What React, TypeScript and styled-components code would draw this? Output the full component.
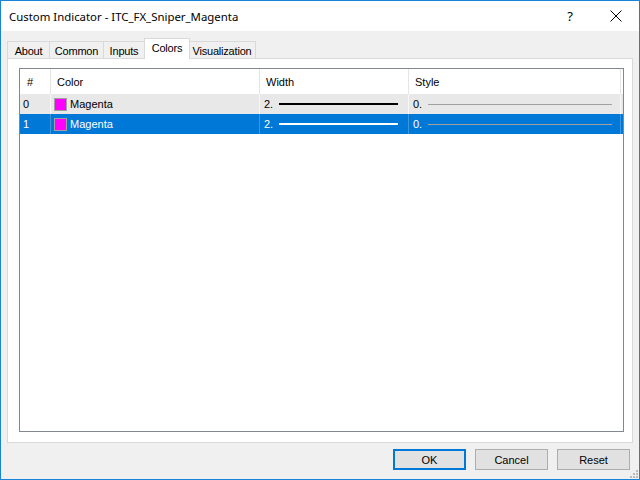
import styled, { createGlobalStyle } from "styled-components";

const GlobalStyle = createGlobalStyle`
  html, body {
    margin: 0;
    padding: 0;
    background: #ffffff;
  }
  * {
    box-sizing: border-box;
  }
`;

const Window = styled.div`
  position: relative;
  width: 640px;
  height: 480px;
  border: 1px solid #1883d7;
  background: #f0f0f0;
  display: flex;
  flex-direction: column;
  font-family: "Liberation Sans", Arial, sans-serif;
  font-size: 11px;
  color: #000;
`;

const TitleBar = styled.header`
  height: 30px;
  background: #ffffff;
  display: flex;
  align-items: center;
  padding-left: 8px;
`;

const Title = styled.h1`
  flex: 1;
  margin: 0;
  font-family: "Noto Sans", "Open Sans", sans-serif;
  font-weight: normal;
  font-size: 11.4px;
  color: #000;
`;

const CaptionButton = styled.button`
  width: 46px;
  height: 30px;
  border: 0;
  background: transparent;
  display: flex;
  align-items: center;
  justify-content: center;
  font-family: "Noto Sans", sans-serif;
  font-size: 13px;
  color: #000;
  padding: 0;
`;

const Body = styled.main`
  flex: 1;
  display: flex;
  flex-direction: column;
  padding: 7px 6px 0 6px;
`;

const TabStrip = styled.nav`
  display: flex;
  align-items: flex-end;
  height: 21px;
  margin-bottom: -1px;
  position: relative;
  z-index: 1;
`;

const Tab = styled.div<{ $active?: boolean; $width: number }>`
  width: ${(p) => p.$width + (p.$active ? 2 : 0)}px;
  height: ${(p) => (p.$active ? "21px" : "18px")};
  padding-top: ${(p) => (p.$active ? "3px" : "3px")};
  margin-left: ${(p) => (p.$active ? "-1px" : "0")};
  margin-right: ${(p) => (p.$active ? "-1px" : "0")};
  border: 1px solid #d9d9d9;
  border-left: ${(p) => (p.$active ? "1px solid #d9d9d9" : "0")};
  border-bottom: ${(p) => (p.$active ? "0" : "1px solid #d9d9d9")};
  background: ${(p) => (p.$active ? "#ffffff" : "#f0f0f0")};
  text-align: center;
  white-space: nowrap;
  letter-spacing: -0.2px;
  position: relative;
  z-index: ${(p) => (p.$active ? 2 : 1)};
  &:first-child {
    border-left: 1px solid #d9d9d9;
  }
`;

const Panel = styled.section`
  height: 385px;
  border: 1px solid #d9d9d9;
  background: #ffffff;
  padding: 9px 8px 10px 11px;
  display: flex;
`;

const ListView = styled.div`
  flex: 1;
  border: 1px solid #828790;
  background: #ffffff;
`;

const GridRow = styled.div<{ $kind: "head" | "plain" | "selected" }>`
  display: grid;
  grid-template-columns: 31px 209px 149px 212px;
  height: ${(p) => (p.$kind === "head" ? "25px" : "20px")};
  background: ${(p) =>
    p.$kind === "selected" ? "#0078d7" : p.$kind === "plain" ? "#e8e8e8" : "#ffffff"};
  color: ${(p) => (p.$kind === "selected" ? "#ffffff" : "#000000")};
`;

const Cell = styled.div<{ $head?: boolean; $selected?: boolean; $pad?: number }>`
  display: flex;
  align-items: center;
  gap: 3px;
  padding-left: ${(p) => p.$pad ?? (p.$head ? 6 : 3)}px;
  border-right: 1px solid
    ${(p) => (p.$head ? "#e5e5e5" : p.$selected ? "#3d97df" : "#f7f7f7")};
  overflow: hidden;
  white-space: nowrap;
`;

const Swatch = styled.span<{ $color: string }>`
  width: 13px;
  height: 13px;
  flex: none;
  border: 1px solid #a0a0a0;
  background: ${(p) => p.$color};
`;

const LineSample = styled.span<{ $thick: number; $color: string; $right: number }>`
  flex: 1;
  height: ${(p) => p.$thick}px;
  margin-right: ${(p) => p.$right}px;
  margin-left: 3px;
  background: ${(p) => p.$color};
`;

const ButtonRow = styled.footer`
  display: flex;
  justify-content: flex-end;
  gap: 9px;
  padding: 6px 3px 0 0;
`;

const PushButton = styled.button<{ $default?: boolean }>`
  width: 73px;
  height: 21px;
  background: #e1e1e1;
  border: ${(p) => (p.$default ? "2px solid #0078d7" : "1px solid #adadad")};
  font-family: "Liberation Sans", Arial, sans-serif;
  font-size: 11px;
  color: #000;
  padding: 0;
`;

const SizeGrip = styled.svg`
  position: absolute;
  right: 1px;
  bottom: 1px;
`;

const rows = [
  { id: "0", color: "#ff00ff", name: "Magenta", width: "2.", style: "0." },
  { id: "1", color: "#ff00ff", name: "Magenta", width: "2.", style: "0." },
];

const tabs = [
  { label: "About", width: 43 },
  { label: "Common", width: 54 },
  { label: "Inputs", width: 41 },
  { label: "Colors", width: 44 },
  { label: "Visualization", width: 67 },
];

export default function App() {
  const selected = 1;
  return (
    <>
      <GlobalStyle />
      <Window>
        <TitleBar>
          <Title>Custom Indicator - ITC_FX_Sniper_Magenta</Title>
          <CaptionButton>?</CaptionButton>
          <CaptionButton>
            <svg width="12" height="12" viewBox="0 0 12 12">
              <path d="M0.5 0.5 L11.5 11.5 M11.5 0.5 L0.5 11.5" stroke="#000" strokeWidth="1" />
            </svg>
          </CaptionButton>
        </TitleBar>
        <Body>
          <TabStrip>
            {tabs.map((t) => (
              <Tab key={t.label} $width={t.width} $active={t.label === "Colors"}>
                {t.label}
              </Tab>
            ))}
          </TabStrip>
          <Panel>
            <ListView>
              <GridRow $kind="head">
                <Cell $head $pad={7}>#</Cell>
                <Cell $head>Color</Cell>
                <Cell $head>Width</Cell>
                <Cell $head>Style</Cell>
              </GridRow>
              {rows.map((r, i) => {
                const sel = i === selected;
                return (
                  <GridRow key={r.id} $kind={sel ? "selected" : "plain"}>
                    <Cell $selected={sel}>{r.id}</Cell>
                    <Cell $selected={sel}>
                      <Swatch $color={r.color} />
                      {r.name}
                    </Cell>
                    <Cell $selected={sel} $pad={4}>
                      {r.width}
                      <LineSample $thick={2} $color={sel ? "#ffffff" : "#000000"} $right={10} />
                    </Cell>
                    <Cell $selected={sel} $pad={4}>
                      {r.style}
                      <LineSample $thick={1} $color="#a0a0a0" $right={8} />
                    </Cell>
                  </GridRow>
                );
              })}
            </ListView>
          </Panel>
          <ButtonRow>
            <PushButton $default>OK</PushButton>
            <PushButton>Cancel</PushButton>
            <PushButton>Reset</PushButton>
          </ButtonRow>
        </Body>
        <SizeGrip width="8" height="8" viewBox="0 0 8 8">
          <rect x="6" y="0" width="2" height="2" fill="#bcbcbc" />
          <rect x="3" y="3" width="2" height="2" fill="#bcbcbc" />
          <rect x="6" y="3" width="2" height="2" fill="#bcbcbc" />
          <rect x="0" y="6" width="2" height="2" fill="#bcbcbc" />
          <rect x="3" y="6" width="2" height="2" fill="#bcbcbc" />
          <rect x="6" y="6" width="2" height="2" fill="#bcbcbc" />
        </SizeGrip>
      </Window>
    </>
  );
}
